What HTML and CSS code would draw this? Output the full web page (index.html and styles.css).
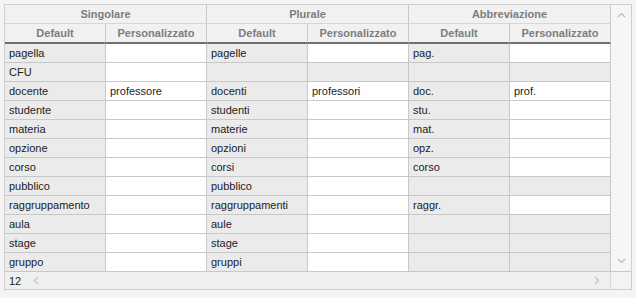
FILE: index.html
```html
<!DOCTYPE html>
<html lang="it">
<head>
<meta charset="utf-8">
<title>Terminologia</title>
<link rel="stylesheet" href="styles.css">
</head>
<body>
<div class="frame">
  <table class="grid">
    <colgroup><col class="c"><col class="c"><col class="c"><col class="c"><col class="c"><col class="c"></colgroup>
    <thead>
      <tr class="group"><th colspan="2">Singolare</th><th colspan="2">Plurale</th><th colspan="2">Abbreviazione</th></tr>
      <tr class="sub"><th>Default</th><th>Personalizzato</th><th>Default</th><th>Personalizzato</th><th>Default</th><th>Personalizzato</th></tr>
    </thead>
    <tbody>
      <tr><td class="ro">pagella</td><td></td><td class="ro">pagelle</td><td></td><td class="ro">pag.</td><td></td></tr>
      <tr><td class="ro">CFU</td><td></td><td class="ro"></td><td class="ro"></td><td class="ro"></td><td class="ro"></td></tr>
      <tr><td class="ro">docente</td><td>professore</td><td class="ro">docenti</td><td>professori</td><td class="ro">doc.</td><td>prof.</td></tr>
      <tr><td class="ro">studente</td><td></td><td class="ro">studenti</td><td></td><td class="ro">stu.</td><td></td></tr>
      <tr><td class="ro">materia</td><td></td><td class="ro">materie</td><td></td><td class="ro">mat.</td><td></td></tr>
      <tr><td class="ro">opzione</td><td></td><td class="ro">opzioni</td><td></td><td class="ro">opz.</td><td></td></tr>
      <tr><td class="ro">corso</td><td></td><td class="ro">corsi</td><td></td><td class="ro">corso</td><td></td></tr>
      <tr><td class="ro">pubblico</td><td></td><td class="ro">pubblico</td><td></td><td class="ro"></td><td class="ro"></td></tr>
      <tr><td class="ro">raggruppamento</td><td></td><td class="ro">raggruppamenti</td><td></td><td class="ro">raggr.</td><td></td></tr>
      <tr><td class="ro">aula</td><td></td><td class="ro">aule</td><td></td><td class="ro"></td><td class="ro"></td></tr>
      <tr><td class="ro">stage</td><td></td><td class="ro">stage</td><td></td><td class="ro"></td><td class="ro"></td></tr>
      <tr><td class="ro">gruppo</td><td></td><td class="ro">gruppi</td><td></td><td class="ro"></td><td class="ro"></td></tr>
    </tbody>
  </table>
  <div class="vscroll">
    <svg class="chev" width="9" height="6" viewBox="0 0 9 6"><path d="M1 5 L4.5 1.5 L8 5" fill="none" stroke="#b9b9b9" stroke-width="1.2"/></svg>
    <svg class="chev" width="9" height="6" viewBox="0 0 9 6"><path d="M1 1 L4.5 4.5 L8 1" fill="none" stroke="#b9b9b9" stroke-width="1.2"/></svg>
  </div>
  <div class="footer">
    <span class="count">12</span>
    <svg class="arrow" width="6" height="9" viewBox="0 0 6 9"><path d="M5 1 L1.5 4.5 L5 8" fill="none" stroke="#c4c4c4" stroke-width="1.2"/></svg>
    <span class="spacer"></span>
    <svg class="arrow" width="6" height="9" viewBox="0 0 6 9"><path d="M1 1 L4.5 4.5 L1 8" fill="none" stroke="#c4c4c4" stroke-width="1.2"/></svg>
  </div>
  <div class="corner"></div>
</div>
</body>
</html>
```

FILE: styles.css
```css
html, body {
  margin: 0;
  padding: 0;
  background: #f4f4f4;
}

body {
  padding: 4px;
  font-family: "Liberation Sans", Arial, sans-serif;
  font-size: 11px;
  color: #1c1c1c;
}

.frame {
  display: grid;
  grid-template-columns: 606px 20px;
  grid-template-rows: 267px 17px;
  width: max-content;
  border: 1px solid #cfcfcf;
  background: #ffffff;
}

.grid {
  border-collapse: separate;
  border-spacing: 0;
  table-layout: fixed;
  width: 606px;
}

.grid .c {
  width: 101px;
}

.grid th,
.grid td {
  padding: 0 4px;
  line-height: 18px;
  height: 18px;
  border-right: 1px solid #c8c8c8;
  border-bottom: 1px solid #c8c8c8;
  white-space: nowrap;
  overflow: hidden;
}

.grid th {
  background: #f1f1f1;
  color: #7d7d7d;
  font-weight: bold;
  text-align: center;
}

.grid .group th {
  border-bottom-color: #d6d6d6;
}

.grid .sub th {
  border-bottom: 2px solid #6f6f6f;
}

.grid td {
  text-align: left;
  background: #ffffff;
}

.grid td.ro {
  background: #ebebeb;
}

.vscroll {
  background: #f6f6f6;
  border-bottom: 1px solid #c8c8c8;
  display: flex;
  flex-direction: column;
  justify-content: space-between;
  align-items: center;
  padding: 7px 0 7px 1px;
  box-sizing: border-box;
}

.chev {
  display: block;
}

.footer {
  display: flex;
  align-items: center;
  gap: 12px;
  padding: 0 10px 0 4px;
  background: #efefef;
  border-right: 1px solid #d8d8d8;
}

.count {
  color: #222222;
  padding-top: 1px;
}

.spacer {
  flex: 1;
}

.arrow {
  display: block;
}

.corner {
  background: #f3f3f3;
}
```
